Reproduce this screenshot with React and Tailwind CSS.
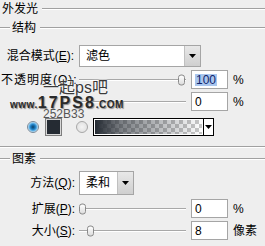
import React from "react";

const Line = ({ className = "" }) => (
  <div className={"h-[2px] border-t border-t-[#a0a0a0] border-b border-b-white " + className} />
);

const Tri = () => (
  <svg width="7" height="4" viewBox="0 0 7 4"><path d="M0 0H7L3.5 4Z" fill="#000" /></svg>
);

const Slider = ({ pos, thumb = true }) => (
  <div className="relative w-[107px] h-full flex items-center">
    <div className="w-full h-[2px] border-t border-t-[#a8a8a8] border-b border-b-white" />
    {thumb && (
      <div
        className="absolute top-1/2 -translate-y-1/2 w-[7px] h-[11px] rounded-[3px] border border-[#8a8a8a] bg-[linear-gradient(#ffffff,#dcdcdc)]"
        style={{ left: pos }}
      />
    )}
  </div>
);

const Box = ({ children, sel }) => (
  <div className="w-[37px] h-[19px] ml-[5px] bg-white border border-[#a5a5a5] flex items-center pl-[3px] text-[12px] leading-none">
    {sel ? <span className="bg-[#a9c6ee] text-[#10246a] px-[1px]">{children}</span> : children}
  </div>
);

export default function App() {
  return (
    <div
      className="relative w-[265px] h-[246px] overflow-hidden bg-[#eeeeee] text-[12px] text-black"
      style={{ fontFamily: '"Liberation Sans","Noto Sans CJK SC",sans-serif' }}
    >
      {/* 外发光 */}
      <div className="flex items-center h-[18px]">
        <span className="pl-[2px] leading-none">外发光</span>
        <Line className="flex-1 ml-[4px]" />
      </div>
      {/* 结构 */}
      <div className="flex items-center h-[19px]">
        <Line className="w-[10px]" />
        <span className="px-[2px] leading-none">结构</span>
        <Line className="flex-1 ml-[2px]" />
      </div>

      {/* 混合模式 */}
      <div className="flex items-center h-[22px] mt-[8px]">
        <span className="w-[79px] text-right pr-[5px] leading-none">混合模式(<u>E</u>):</span>
        <div className="w-[122px] h-[22px] bg-white border border-[#a5a5a5] flex">
          <span className="flex-1 pl-[6px] flex items-center leading-none">滤色</span>
          <div className="w-[16px] bg-[linear-gradient(#e8e8e8,#cfcfcf)] border-l border-[#c0c0c0] flex items-center justify-center">
            <Tri />
          </div>
        </div>
      </div>

      {/* 不透明度 */}
      <div className="flex items-center h-[19px] mt-[3px]">
        <span className="w-[79px] pl-[1px] pr-[4px] leading-none tracking-[1px] whitespace-nowrap">不透明度(<u>O</u>):</span>
        <Slider pos="99px" />
        <Box sel>100</Box>
        <span className="ml-[5px] leading-none">%</span>
      </div>

      {/* 杂色 */}
      <div className="flex items-center h-[19px] mt-[3px]">
        <span className="w-[79px]" />
        <Slider thumb={false} />
        <Box>0</Box>
        <span className="ml-[5px] leading-none">%</span>
      </div>

      {/* colour / gradient */}
      <div className="flex items-center h-[18px] mt-[7px]">
        <div className="ml-[27px] w-[12px] h-[12px] rounded-full border border-[#7a8a99] bg-[radial-gradient(circle,#0a3f66_0,#1e7fc4_35%,#7cc3ef_60%,#e9f3fa_75%)]" />
        <div className="ml-[6px] w-[17px] h-[18px] border border-[#7d7d7d] p-[1px] bg-[#d8d8d8]">
          <div className="w-full h-full bg-[#252B33]" />
        </div>
        <div className="ml-[14px] w-[12px] h-[12px] rounded-full border border-[#a8a8a8] bg-[radial-gradient(circle,#f4f4f4,#dcdcdc)]" />
        <div className="ml-[5px] w-[121px] h-[18px] border border-black bg-white flex">
          <div className="flex-1 p-[1px]">
            <div className="w-full h-full bg-[conic-gradient(#c8c8c8_25%,#ffffff_0_50%,#c8c8c8_0_75%,#ffffff_0)] bg-[length:8px_8px]">
              <div className="w-full h-full bg-[linear-gradient(to_right,#252b33,rgba(37,43,51,0.6)_25%,rgba(37,43,51,0))]" />
            </div>
          </div>
          <div className="w-[10px] border-l border-black flex items-center justify-center">
            <Tri />
          </div>
        </div>
      </div>

      <Line className="mt-[10px]" />

      {/* 图素 */}
      <div className="flex items-center h-[16px] mt-[3px]">
        <Line className="w-[10px]" />
        <span className="px-[2px] leading-none">图素</span>
        <Line className="flex-1 ml-[2px]" />
      </div>

      {/* 方法 */}
      <div className="flex items-center h-[24px] mt-[4px]">
        <span className="w-[79px] text-right pr-[4px] leading-none">方法(<u>Q</u>):</span>
        <div className="w-[55px] h-[24px] bg-white border border-[#a5a5a5] flex">
          <span className="flex-1 pl-[6px] flex items-center leading-none">柔和</span>
          <div className="w-[16px] bg-[linear-gradient(#e8e8e8,#cfcfcf)] border-l border-[#c0c0c0] flex items-center justify-center">
            <Tri />
          </div>
        </div>
      </div>

      {/* 扩展 */}
      <div className="flex items-center h-[19px] mt-[4px]">
        <span className="w-[79px] text-right pr-[4px] leading-none">扩展(<u>P</u>):</span>
        <Slider pos="0px" />
        <Box>0</Box>
        <span className="ml-[5px] leading-none">%</span>
      </div>

      {/* 大小 */}
      <div className="flex items-center h-[19px] mt-[3px]">
        <span className="w-[79px] text-right pr-[4px] leading-none">大小(<u>S</u>):</span>
        <Slider pos="8px" />
        <Box>8</Box>
        <span className="ml-[5px] leading-none">像素</span>
      </div>

      {/* watermark */}
      <div className="absolute left-[43px] top-[80px] text-[16px] leading-none text-[#3a3a3a] [text-shadow:0_0_2px_#fff,0_0_2px_#fff]">
        一起ps吧
      </div>
      <div className="absolute left-[10px] top-[95px] flex items-baseline leading-none text-[#2a2a2a] [text-shadow:1px_1px_1px_#888,0_0_2px_#fff]">
        <span className="text-[10px] font-bold tracking-[0.5px]">www.</span>
        <span className="text-[16px] font-black tracking-[2px]">17PS8</span>
        <span className="text-[10px] font-bold tracking-[0.5px]">.COM</span>
      </div>
      <div className="absolute left-[43px] top-[108px] text-[12px] leading-none text-[#555]">252B33</div>
    </div>
  );
}
